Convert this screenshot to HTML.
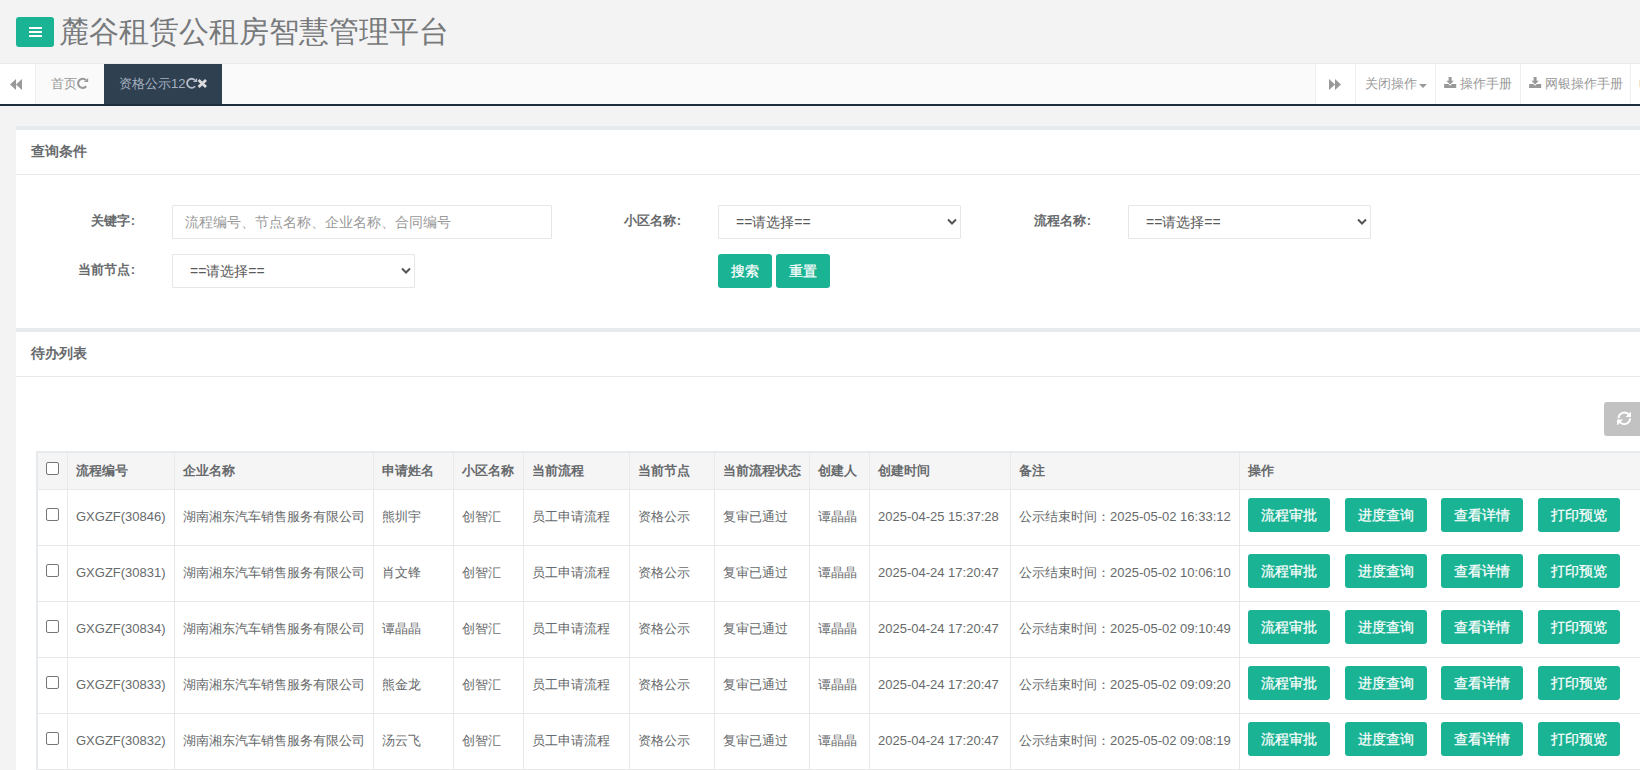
<!DOCTYPE html><html><head><meta charset="utf-8"><title>麓谷租赁公租房智慧管理平台</title><style>
*{box-sizing:border-box;margin:0;padding:0}
html,body{width:1640px;height:770px;overflow:hidden}
body{background:#f3f3f4;font-family:"Liberation Sans",sans-serif;font-size:13px;color:#676a6c;position:relative}
div,span,svg{position:absolute}
.t{white-space:nowrap;line-height:1}
.b{font-weight:bold}
.btn{background:#1ab394;border-radius:3px;color:#fff;font-size:14px;-webkit-text-stroke:0.25px #fff;text-align:center;white-space:nowrap}
.ln{background:#e7e7e7}
.cb{width:13px;height:13px;border:1px solid #767676;border-radius:2px;background:#fff}
</style></head><body>
<div style="left:16px;top:17px;width:38px;height:30px;background:#1ab394;border-radius:3px"></div>
<div style="left:28.6px;top:27px;width:13.2px;height:2px;background:#fff"></div>
<div style="left:28.6px;top:31px;width:13.2px;height:2px;background:#fff"></div>
<div style="left:28.6px;top:35px;width:13.2px;height:2px;background:#fff"></div>
<div class="t" style="left:59px;top:16.5px;font-size:30px;color:#77797b">麓谷租赁公租房智慧管理平台</div>
<div style="left:0px;top:63px;width:1640px;height:1px;background:#e7eaec"></div>
<div style="left:0px;top:64px;width:1640px;height:40px;background:#fafafa"></div>
<div style="left:0px;top:104px;width:1640px;height:2px;background:#1f2e3d"></div>
<div style="left:0px;top:64px;width:35px;height:40px;background:#fff"></div>
<div style="left:35px;top:64px;width:1px;height:40px;background:#eee"></div>
<svg style="left:10px;top:79px" width="12" height="11" viewBox="0 0 12 11"><path d="M0 5.5L6 0V11Z M6 5.5L12 0V11Z" fill="#999"/></svg>
<div class="t" style="left:51px;top:77px;font-size:13px;color:#999">首页</div>
<svg style="left:77px;top:77px" width="12" height="12" viewBox="0 0 12 12"><path d="M8.87 3.08A4.55 4.55 0 1 0 9.14 9.23" stroke="#999" stroke-width="2.1" fill="none"/><path d="M6.9 5.1H11.1V0.9Z" fill="#999"/></svg>
<div style="left:104px;top:64px;width:118px;height:40px;background:#2f4050"></div>
<div class="t" style="left:119px;top:77px;font-size:13px;color:#a7b1c2">资格公示12</div>
<svg style="left:186px;top:77px" width="12" height="12" viewBox="0 0 12 12"><path d="M8.87 3.08A4.55 4.55 0 1 0 9.14 9.23" stroke="#b8bfcc" stroke-width="1.8" fill="none"/><path d="M6.9 5.1H11.1V0.9Z" fill="#b8bfcc"/></svg>
<svg style="left:197px;top:79px" width="11" height="9" viewBox="0 0 11 9"><path d="M1.6 1L9.0 8M9.0 1L1.6 8" stroke="#dcdcdc" stroke-width="2.8"/></svg>
<div style="left:1315px;top:64px;width:325px;height:40px;background:#fff"></div>
<div style="left:1315px;top:64px;width:1px;height:40px;background:#eee"></div>
<div style="left:1355px;top:64px;width:1px;height:40px;background:#eee"></div>
<div style="left:1435px;top:64px;width:1px;height:40px;background:#eee"></div>
<div style="left:1520px;top:64px;width:1px;height:40px;background:#eee"></div>
<div style="left:1630px;top:64px;width:1px;height:40px;background:#eee"></div>
<svg style="left:1329px;top:79px" width="12" height="11" viewBox="0 0 12 11"><path d="M12 5.5L6 0V11Z M6 5.5L0 0V11Z" fill="#999"/></svg>
<div class="t" style="left:1365px;top:77px;font-size:13px;color:#999">关闭操作</div>
<svg style="left:1419px;top:84px" width="8" height="4" viewBox="0 0 8 4"><path d="M0 0H8L4 4Z" fill="#999"/></svg>
<svg style="left:1444px;top:77px" width="13" height="11" viewBox="0 0 13 11"><path d="M4.6 0H7.6V3.7H9.9L6.1 7.5L2.3 3.7H4.6Z" fill="#999"/><path d="M0.1 7H4.4L6.1 8.7L7.8 7H12.2V11H0.1Z" fill="#999"/></svg>
<div class="t" style="left:1460px;top:77px;font-size:13px;color:#999">操作手册</div>
<svg style="left:1529px;top:77px" width="13" height="11" viewBox="0 0 13 11"><path d="M4.6 0H7.6V3.7H9.9L6.1 7.5L2.3 3.7H4.6Z" fill="#999"/><path d="M0.1 7H4.4L6.1 8.7L7.8 7H12.2V11H0.1Z" fill="#999"/></svg>
<div class="t" style="left:1545px;top:77px;font-size:13px;color:#999">网银操作手册</div>
<div style="left:1639px;top:80px;width:1px;height:7px;background:#f6e3c8"></div>
<div style="left:16px;top:126px;width:1624px;height:4px;background:#e7eaec"></div>
<div style="left:16px;top:130px;width:1624px;height:198px;background:#fff"></div>
<div class="t" style="left:31px;top:144px;font-size:14px;font-weight:bold;color:#676a6c">查询条件</div>
<div style="left:16px;top:174px;width:1624px;height:1px;background:#e7eaec"></div>
<div class="t b" style="right:1505px;top:214px;font-size:13px;color:#676a6c">关键字<span style="position:static;margin-left:1px">:</span></div>
<div class="t b" style="right:1505px;top:263px;font-size:13px;color:#676a6c">当前节点<span style="position:static;margin-left:1px">:</span></div>
<div class="t b" style="right:959px;top:214px;font-size:13px;color:#676a6c">小区名称<span style="position:static;margin-left:1px">:</span></div>
<div class="t b" style="right:549px;top:214px;font-size:13px;color:#676a6c">流程名称<span style="position:static;margin-left:1px">:</span></div>
<div style="left:172px;top:205px;width:380px;height:34px;background:#fff;border:1px solid #e5e6e7;border-radius:1px"></div>
<div class="t" style="left:185px;top:215px;font-size:14px;color:#999">流程编号、节点名称、企业名称、合同编号</div>
<div style="left:718px;top:205px;width:243px;height:34px;background:#fff;border:1px solid #e5e6e7;border-radius:1px"></div>
<div class="t" style="left:736px;top:215px;font-size:14px;color:#5a5a5a">==请选择==</div>
<svg style="left:947px;top:218px" width="10" height="8" viewBox="0 0 10 8"><path d="M1 1.5L5 5.5L9 1.5" stroke="#555" stroke-width="2" fill="none"/></svg>
<div style="left:1128px;top:205px;width:243px;height:34px;background:#fff;border:1px solid #e5e6e7;border-radius:1px"></div>
<div class="t" style="left:1146px;top:215px;font-size:14px;color:#5a5a5a">==请选择==</div>
<svg style="left:1357px;top:218px" width="10" height="8" viewBox="0 0 10 8"><path d="M1 1.5L5 5.5L9 1.5" stroke="#555" stroke-width="2" fill="none"/></svg>
<div style="left:172px;top:254px;width:243px;height:34px;background:#fff;border:1px solid #e5e6e7;border-radius:1px"></div>
<div class="t" style="left:190px;top:264px;font-size:14px;color:#5a5a5a">==请选择==</div>
<svg style="left:401px;top:267px" width="10" height="8" viewBox="0 0 10 8"><path d="M1 1.5L5 5.5L9 1.5" stroke="#555" stroke-width="2" fill="none"/></svg>
<div class="btn" style="left:718px;top:254px;width:54px;height:34px;line-height:34px">搜索</div>
<div class="btn" style="left:776px;top:254px;width:54px;height:34px;line-height:34px">重置</div>
<div style="left:16px;top:328px;width:1624px;height:4px;background:#e7eaec"></div>
<div style="left:16px;top:332px;width:1624px;height:438px;background:#fff"></div>
<div class="t" style="left:31px;top:346px;font-size:14px;font-weight:bold;color:#676a6c">待办列表</div>
<div style="left:16px;top:376px;width:1624px;height:1px;background:#e7eaec"></div>
<div style="left:1604px;top:402px;width:40px;height:34px;background:#c2c2c2;border-radius:3px"></div>
<svg style="left:1616.6px;top:410.6px" width="14.6" height="14.6" viewBox="0 0 14 14"><path d="M1.5 7A5.5 5.5 0 0 1 11.6 4" stroke="#fff" stroke-width="1.8" fill="none"/><path d="M14 0V5.8H8.2Z" fill="#fff"/><path d="M12.5 7A5.5 5.5 0 0 1 2.4 10" stroke="#fff" stroke-width="1.8" fill="none"/><path d="M0 14V8.2H5.8Z" fill="#fff"/></svg>
<div style="left:36px;top:451px;width:1624px;height:319px;background:#fff"></div>
<div style="left:37px;top:453px;width:1623px;height:36px;background:#f5f5f6"></div>
<div style="left:36px;top:451px;width:1624px;height:2px;background:#e7eaec"></div>
<div style="left:36px;top:451px;width:2px;height:319px;background:#e7eaec"></div>
<div style="left:38px;top:489px;width:1622px;height:1px;background:#e7eaec"></div>
<div style="left:38px;top:545px;width:1622px;height:1px;background:#e7e7e7"></div>
<div style="left:38px;top:601px;width:1622px;height:1px;background:#e7e7e7"></div>
<div style="left:38px;top:657px;width:1622px;height:1px;background:#e7e7e7"></div>
<div style="left:38px;top:713px;width:1622px;height:1px;background:#e7e7e7"></div>
<div style="left:38px;top:769px;width:1622px;height:1px;background:#e7e7e7"></div>
<div style="left:67px;top:453px;width:1px;height:36px;background:#e7eaec"></div>
<div style="left:67px;top:490px;width:1px;height:280px;background:#e7e7e7"></div>
<div style="left:174px;top:453px;width:1px;height:36px;background:#e7eaec"></div>
<div style="left:174px;top:490px;width:1px;height:280px;background:#e7e7e7"></div>
<div style="left:373px;top:453px;width:1px;height:36px;background:#e7eaec"></div>
<div style="left:373px;top:490px;width:1px;height:280px;background:#e7e7e7"></div>
<div style="left:453px;top:453px;width:1px;height:36px;background:#e7eaec"></div>
<div style="left:453px;top:490px;width:1px;height:280px;background:#e7e7e7"></div>
<div style="left:523px;top:453px;width:1px;height:36px;background:#e7eaec"></div>
<div style="left:523px;top:490px;width:1px;height:280px;background:#e7e7e7"></div>
<div style="left:629px;top:453px;width:1px;height:36px;background:#e7eaec"></div>
<div style="left:629px;top:490px;width:1px;height:280px;background:#e7e7e7"></div>
<div style="left:714px;top:453px;width:1px;height:36px;background:#e7eaec"></div>
<div style="left:714px;top:490px;width:1px;height:280px;background:#e7e7e7"></div>
<div style="left:809px;top:453px;width:1px;height:36px;background:#e7eaec"></div>
<div style="left:809px;top:490px;width:1px;height:280px;background:#e7e7e7"></div>
<div style="left:869px;top:453px;width:1px;height:36px;background:#e7eaec"></div>
<div style="left:869px;top:490px;width:1px;height:280px;background:#e7e7e7"></div>
<div style="left:1010px;top:453px;width:1px;height:36px;background:#e7eaec"></div>
<div style="left:1010px;top:490px;width:1px;height:280px;background:#e7e7e7"></div>
<div style="left:1239px;top:453px;width:1px;height:36px;background:#e7eaec"></div>
<div style="left:1239px;top:490px;width:1px;height:280px;background:#e7e7e7"></div>
<div style="left:46px;top:462px;width:13px;height:13px;border:1px solid #767676;border-radius:2px;background:#fff"></div>
<div class="t" style="left:76px;top:464px;font-size:13px;font-weight:bold;color:#676a6c">流程编号</div>
<div class="t" style="left:183px;top:464px;font-size:13px;font-weight:bold;color:#676a6c">企业名称</div>
<div class="t" style="left:382px;top:464px;font-size:13px;font-weight:bold;color:#676a6c">申请姓名</div>
<div class="t" style="left:462px;top:464px;font-size:13px;font-weight:bold;color:#676a6c">小区名称</div>
<div class="t" style="left:532px;top:464px;font-size:13px;font-weight:bold;color:#676a6c">当前流程</div>
<div class="t" style="left:638px;top:464px;font-size:13px;font-weight:bold;color:#676a6c">当前节点</div>
<div class="t" style="left:723px;top:464px;font-size:13px;font-weight:bold;color:#676a6c">当前流程状态</div>
<div class="t" style="left:818px;top:464px;font-size:13px;font-weight:bold;color:#676a6c">创建人</div>
<div class="t" style="left:878px;top:464px;font-size:13px;font-weight:bold;color:#676a6c">创建时间</div>
<div class="t" style="left:1019px;top:464px;font-size:13px;font-weight:bold;color:#676a6c">备注</div>
<div class="t" style="left:1248px;top:464px;font-size:13px;font-weight:bold;color:#676a6c">操作</div>
<div style="left:46px;top:508px;width:13px;height:13px;border:1px solid #767676;border-radius:2px;background:#fff"></div>
<div class="t" style="left:76px;top:510px;font-size:13px;color:#676a6c">GXGZF(30846)</div>
<div class="t" style="left:183px;top:510px;font-size:13px;color:#676a6c">湖南湘东汽车销售服务有限公司</div>
<div class="t" style="left:382px;top:510px;font-size:13px;color:#676a6c">熊圳宇</div>
<div class="t" style="left:462px;top:510px;font-size:13px;color:#676a6c">创智汇</div>
<div class="t" style="left:532px;top:510px;font-size:13px;color:#676a6c">员工申请流程</div>
<div class="t" style="left:638px;top:510px;font-size:13px;color:#676a6c">资格公示</div>
<div class="t" style="left:723px;top:510px;font-size:13px;color:#676a6c">复审已通过</div>
<div class="t" style="left:818px;top:510px;font-size:13px;color:#676a6c">谭晶晶</div>
<div class="t" style="left:878px;top:510px;font-size:13px;color:#676a6c">2025-04-25 15:37:28</div>
<div class="t" style="left:1019px;top:510px;font-size:13px;color:#676a6c">公示结束时间：2025-05-02 16:33:12</div>
<div class="btn" style="left:1248px;top:498px;width:82px;height:34px;line-height:34px">流程审批</div>
<div class="btn" style="left:1345px;top:498px;width:82px;height:34px;line-height:34px">进度查询</div>
<div class="btn" style="left:1441px;top:498px;width:82px;height:34px;line-height:34px">查看详情</div>
<div class="btn" style="left:1538px;top:498px;width:82px;height:34px;line-height:34px">打印预览</div>
<div style="left:46px;top:564px;width:13px;height:13px;border:1px solid #767676;border-radius:2px;background:#fff"></div>
<div class="t" style="left:76px;top:566px;font-size:13px;color:#676a6c">GXGZF(30831)</div>
<div class="t" style="left:183px;top:566px;font-size:13px;color:#676a6c">湖南湘东汽车销售服务有限公司</div>
<div class="t" style="left:382px;top:566px;font-size:13px;color:#676a6c">肖文锋</div>
<div class="t" style="left:462px;top:566px;font-size:13px;color:#676a6c">创智汇</div>
<div class="t" style="left:532px;top:566px;font-size:13px;color:#676a6c">员工申请流程</div>
<div class="t" style="left:638px;top:566px;font-size:13px;color:#676a6c">资格公示</div>
<div class="t" style="left:723px;top:566px;font-size:13px;color:#676a6c">复审已通过</div>
<div class="t" style="left:818px;top:566px;font-size:13px;color:#676a6c">谭晶晶</div>
<div class="t" style="left:878px;top:566px;font-size:13px;color:#676a6c">2025-04-24 17:20:47</div>
<div class="t" style="left:1019px;top:566px;font-size:13px;color:#676a6c">公示结束时间：2025-05-02 10:06:10</div>
<div class="btn" style="left:1248px;top:554px;width:82px;height:34px;line-height:34px">流程审批</div>
<div class="btn" style="left:1345px;top:554px;width:82px;height:34px;line-height:34px">进度查询</div>
<div class="btn" style="left:1441px;top:554px;width:82px;height:34px;line-height:34px">查看详情</div>
<div class="btn" style="left:1538px;top:554px;width:82px;height:34px;line-height:34px">打印预览</div>
<div style="left:46px;top:620px;width:13px;height:13px;border:1px solid #767676;border-radius:2px;background:#fff"></div>
<div class="t" style="left:76px;top:622px;font-size:13px;color:#676a6c">GXGZF(30834)</div>
<div class="t" style="left:183px;top:622px;font-size:13px;color:#676a6c">湖南湘东汽车销售服务有限公司</div>
<div class="t" style="left:382px;top:622px;font-size:13px;color:#676a6c">谭晶晶</div>
<div class="t" style="left:462px;top:622px;font-size:13px;color:#676a6c">创智汇</div>
<div class="t" style="left:532px;top:622px;font-size:13px;color:#676a6c">员工申请流程</div>
<div class="t" style="left:638px;top:622px;font-size:13px;color:#676a6c">资格公示</div>
<div class="t" style="left:723px;top:622px;font-size:13px;color:#676a6c">复审已通过</div>
<div class="t" style="left:818px;top:622px;font-size:13px;color:#676a6c">谭晶晶</div>
<div class="t" style="left:878px;top:622px;font-size:13px;color:#676a6c">2025-04-24 17:20:47</div>
<div class="t" style="left:1019px;top:622px;font-size:13px;color:#676a6c">公示结束时间：2025-05-02 09:10:49</div>
<div class="btn" style="left:1248px;top:610px;width:82px;height:34px;line-height:34px">流程审批</div>
<div class="btn" style="left:1345px;top:610px;width:82px;height:34px;line-height:34px">进度查询</div>
<div class="btn" style="left:1441px;top:610px;width:82px;height:34px;line-height:34px">查看详情</div>
<div class="btn" style="left:1538px;top:610px;width:82px;height:34px;line-height:34px">打印预览</div>
<div style="left:46px;top:676px;width:13px;height:13px;border:1px solid #767676;border-radius:2px;background:#fff"></div>
<div class="t" style="left:76px;top:678px;font-size:13px;color:#676a6c">GXGZF(30833)</div>
<div class="t" style="left:183px;top:678px;font-size:13px;color:#676a6c">湖南湘东汽车销售服务有限公司</div>
<div class="t" style="left:382px;top:678px;font-size:13px;color:#676a6c">熊金龙</div>
<div class="t" style="left:462px;top:678px;font-size:13px;color:#676a6c">创智汇</div>
<div class="t" style="left:532px;top:678px;font-size:13px;color:#676a6c">员工申请流程</div>
<div class="t" style="left:638px;top:678px;font-size:13px;color:#676a6c">资格公示</div>
<div class="t" style="left:723px;top:678px;font-size:13px;color:#676a6c">复审已通过</div>
<div class="t" style="left:818px;top:678px;font-size:13px;color:#676a6c">谭晶晶</div>
<div class="t" style="left:878px;top:678px;font-size:13px;color:#676a6c">2025-04-24 17:20:47</div>
<div class="t" style="left:1019px;top:678px;font-size:13px;color:#676a6c">公示结束时间：2025-05-02 09:09:20</div>
<div class="btn" style="left:1248px;top:666px;width:82px;height:34px;line-height:34px">流程审批</div>
<div class="btn" style="left:1345px;top:666px;width:82px;height:34px;line-height:34px">进度查询</div>
<div class="btn" style="left:1441px;top:666px;width:82px;height:34px;line-height:34px">查看详情</div>
<div class="btn" style="left:1538px;top:666px;width:82px;height:34px;line-height:34px">打印预览</div>
<div style="left:46px;top:732px;width:13px;height:13px;border:1px solid #767676;border-radius:2px;background:#fff"></div>
<div class="t" style="left:76px;top:734px;font-size:13px;color:#676a6c">GXGZF(30832)</div>
<div class="t" style="left:183px;top:734px;font-size:13px;color:#676a6c">湖南湘东汽车销售服务有限公司</div>
<div class="t" style="left:382px;top:734px;font-size:13px;color:#676a6c">汤云飞</div>
<div class="t" style="left:462px;top:734px;font-size:13px;color:#676a6c">创智汇</div>
<div class="t" style="left:532px;top:734px;font-size:13px;color:#676a6c">员工申请流程</div>
<div class="t" style="left:638px;top:734px;font-size:13px;color:#676a6c">资格公示</div>
<div class="t" style="left:723px;top:734px;font-size:13px;color:#676a6c">复审已通过</div>
<div class="t" style="left:818px;top:734px;font-size:13px;color:#676a6c">谭晶晶</div>
<div class="t" style="left:878px;top:734px;font-size:13px;color:#676a6c">2025-04-24 17:20:47</div>
<div class="t" style="left:1019px;top:734px;font-size:13px;color:#676a6c">公示结束时间：2025-05-02 09:08:19</div>
<div class="btn" style="left:1248px;top:722px;width:82px;height:34px;line-height:34px">流程审批</div>
<div class="btn" style="left:1345px;top:722px;width:82px;height:34px;line-height:34px">进度查询</div>
<div class="btn" style="left:1441px;top:722px;width:82px;height:34px;line-height:34px">查看详情</div>
<div class="btn" style="left:1538px;top:722px;width:82px;height:34px;line-height:34px">打印预览</div>
</body></html>
